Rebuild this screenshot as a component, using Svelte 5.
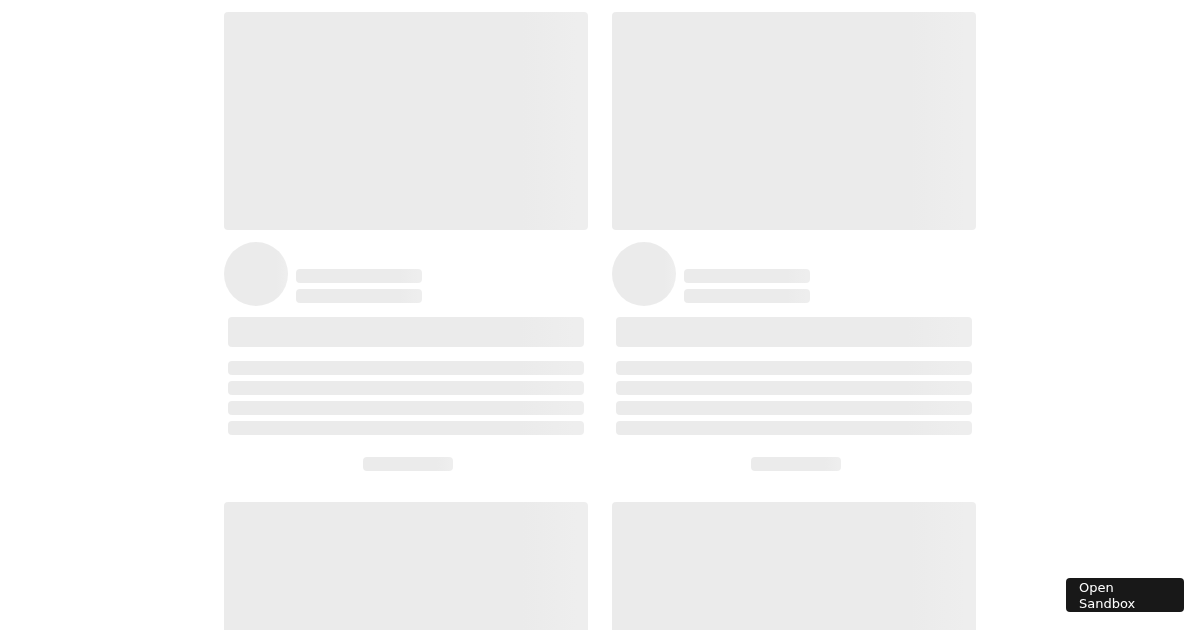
<script lang="ts">
	let {
		count = 4,
		lines = 4,
		onOpen = () => {},
	}: {
		count?: number;
		lines?: number;
		onOpen?: () => void;
	} = $props();
</script>

<main class="card-list" aria-busy="true">
	{#each Array(count) as _, i (i)}
		<article class="card">
			<div class="bone image"></div>
			<div class="author">
				<div class="bone avatar"></div>
				<div class="author-lines">
					<div class="bone line"></div>
					<div class="bone line"></div>
				</div>
			</div>
			<div class="content">
				<div class="bone title"></div>
				<div class="paragraph">
					{#each Array(lines) as _, j (j)}
						<div class="bone line"></div>
					{/each}
				</div>
			</div>
			<div class="footer">
				<div class="bone line action"></div>
			</div>
		</article>
	{/each}
</main>

<button class="sandbox-btn" onclick={onOpen}>Open<br />Sandbox</button>

<style>
	:global(body) {
		background: #fff;
		overflow-x: hidden;
		scrollbar-width: none;
	}

	.card-list {
		display: grid;
		grid-template-columns: repeat(auto-fit, minmax(300px, 1fr));
		column-gap: 24px;
		row-gap: 31px;
		max-width: 752px;
		margin: 0 auto;
		padding: 12px;
	}

	.bone {
		border-radius: 4px;
		background: linear-gradient(90deg, #ebebeb 82%, #eeeeee 97%);
	}

	.image {
		aspect-ratio: 364 / 218;
	}

	.author {
		display: flex;
		align-items: flex-end;
		gap: 8px;
		margin-top: 12px;
	}

	.avatar {
		width: 64px;
		height: 64px;
		border-radius: 50%;
	}

	.author-lines {
		display: grid;
		gap: 6px;
		width: 126px;
		padding-bottom: 3px;
	}

	.line {
		height: 14px;
	}

	.content {
		padding: 11px 4px 0;
	}

	.title {
		height: 30px;
	}

	.paragraph {
		display: grid;
		gap: 6px;
		margin-top: 14px;
	}

	.footer {
		display: flex;
		justify-content: center;
		padding: 22px 0 0 4px;
	}

	.action {
		width: 90px;
	}

	.sandbox-btn {
		position: fixed;
		right: 16px;
		bottom: 18px;
		min-width: 118px;
		padding: 2px 13px 0;
		border: 0;
		border-radius: 4px;
		background: #181818;
		color: #fff;
		font-family: "DejaVu Sans", sans-serif;
		font-size: 13px;
		line-height: 16px;
		text-align: left;
		cursor: pointer;
	}

	.sandbox-btn:hover {
		background: #303030;
	}
</style>
